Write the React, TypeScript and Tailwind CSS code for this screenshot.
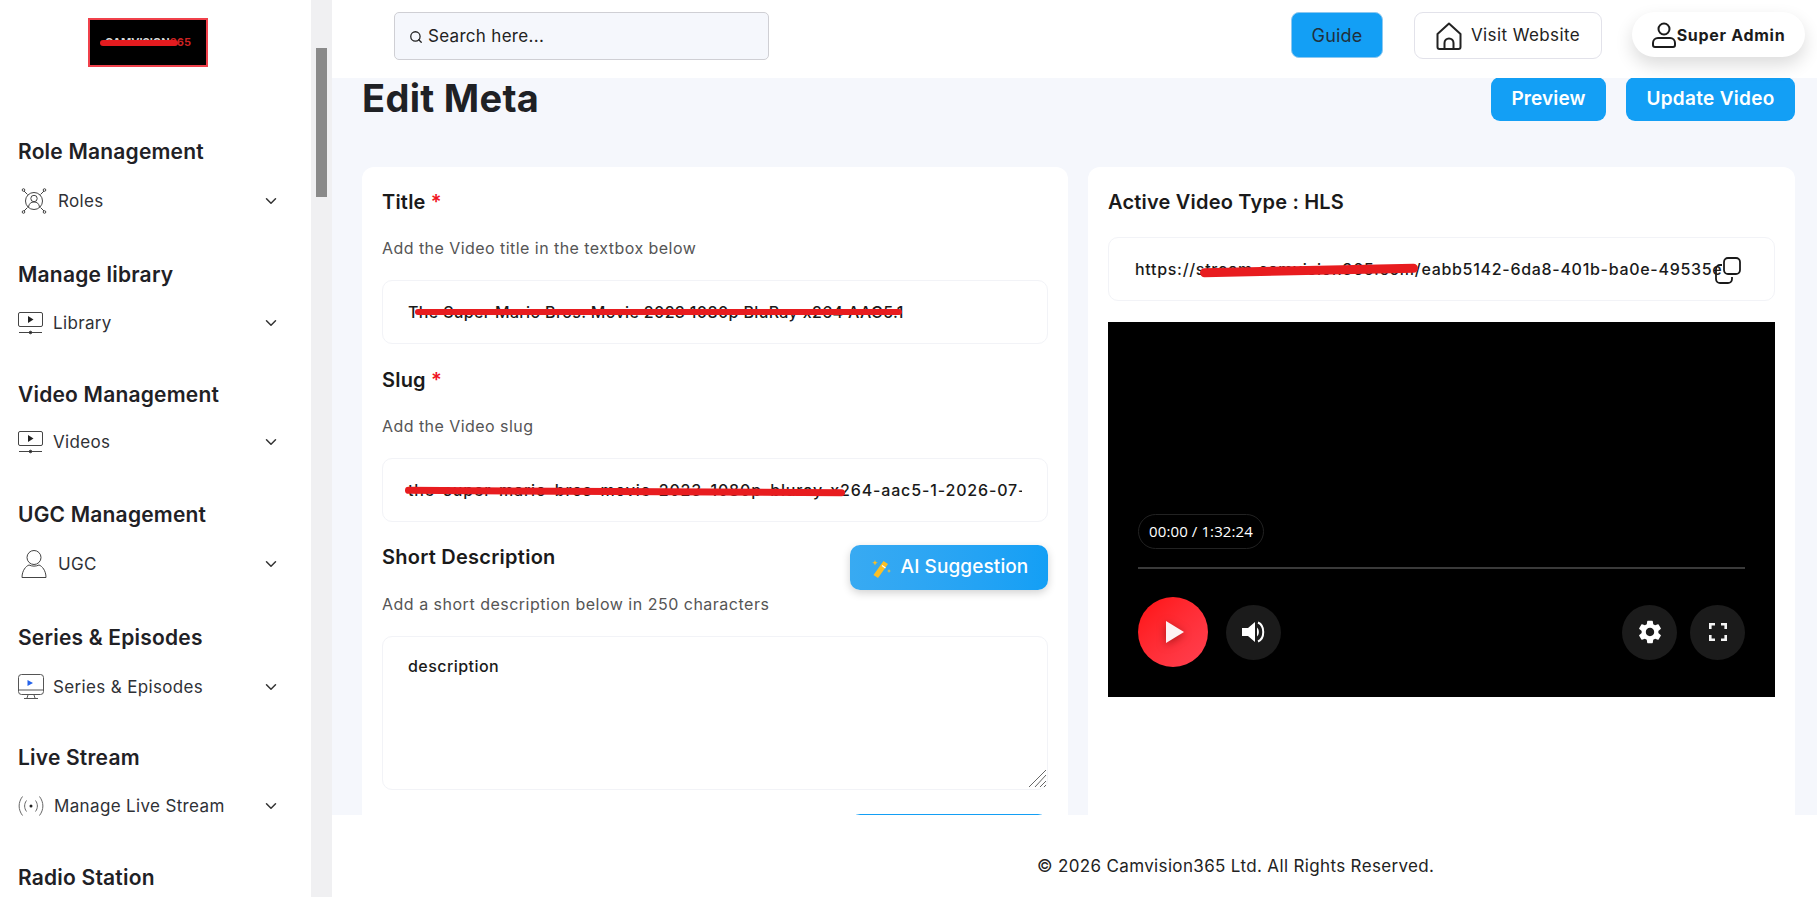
import { ChevronDown, Search } from "lucide-react";
import { MdSettings } from "react-icons/md";
import type { ReactNode } from "react";

function RolesIcon() {
  return (
    <svg width="26" height="30" viewBox="0 0 26 30" fill="none" stroke="#444" strokeWidth="1">
      <circle cx="13" cy="15" r="8.5" />
      <circle cx="13" cy="12.5" r="3.2" />
      <path d="M7.5 21c.5-3.5 2.5-5 5.5-5s5 1.500 5.500 5" />
      <path d="M6.500 8.500 3 5M19.500 8.500 23 5M6.500 21.500 3 25M19.500 21.500 23 25" />
      <circle cx="2.500" cy="4" r="1.300" />
      <circle cx="23.500" cy="4" r="1.300" />
      <circle cx="2.500" cy="26" r="1.300" />
      <circle cx="23.500" cy="26" r="1.300" />
    </svg>
  );
}

function ScreenIcon() {
  return (
    <svg width="25" height="24" viewBox="0 0 25 24" fill="none" stroke="#444" strokeWidth="1">
      <rect x="0.500" y="1.500" width="24" height="14" rx="1.500" />
      <path d="M10 5l5.500 3.500L10 12z" fill="#222" stroke="none" />
      <path d="M1 21.500h23" />
      <circle cx="12.500" cy="21.500" r="1.300" fill="#222" />
    </svg>
  );
}

function UserIcon() {
  return (
    <svg width="26" height="30" viewBox="0 0 26 30" fill="none" stroke="#444" strokeWidth="1">
      <circle cx="13" cy="8.500" r="7" />
      <path d="M1 28.500c0-7 4-11.500 7-12.500 3 1.500 7 1.500 10 0 3 1 7 5.500 7 12.500z" strokeLinejoin="round" />
    </svg>
  );
}

function MonitorIcon() {
  return (
    <svg width="26" height="26" viewBox="0 0 26 26" fill="none" stroke="#555" strokeWidth="1">
      <rect x="0.500" y="0.500" width="25" height="20" rx="3" />
      <path d="M1 16h24" />
      <path d="M9.500 6 15 9l-5.500 3z" fill="#2563eb" stroke="none" />
      <path d="M10 21l-1 3M16 21l1 3M6 24.500h14" />
    </svg>
  );
}

function LiveIcon() {
  return (
    <svg width="26" height="22" viewBox="0 0 26 22" fill="none" stroke="#666" strokeWidth="1">
      <circle cx="13" cy="11" r="1.500" fill="#222" stroke="none" />
      <path d="M8.500 5.500c-2.500 3.500-2.500 7.500 0 11M17.500 5.500c2.500 3.500 2.500 7.500 0 11" />
      <path d="M4.500 1.500c-4.500 6-4.500 13 0 19M21.500 1.500c4.500 6 4.500 13 0 19" />
    </svg>
  );
}

const sections: { title: string; item: string; icon: ReactNode; itemClass: string; boxClass: string; textClass: string }[] = [
  { title: "Role Management", item: "Roles", icon: <RolesIcon />, boxClass: "h-[123px]", itemClass: "mt-[17px]", textClass: "ml-[11px]" },
  { title: "Manage library", item: "Library", icon: <ScreenIcon />, boxClass: "h-[120px]", itemClass: "mt-[16px]", textClass: "ml-[10px]" },
  { title: "Video Management", item: "Videos", icon: <ScreenIcon />, boxClass: "h-[120px]", itemClass: "mt-[15px]", textClass: "ml-[10px]" },
  { title: "UGC Management", item: "UGC", icon: <UserIcon />, boxClass: "h-[123px]", itemClass: "mt-[17px]", textClass: "ml-[11px]" },
  { title: "Series & Episodes", item: "Series & Episodes", icon: <MonitorIcon />, boxClass: "h-[120px]", itemClass: "mt-[17px]", textClass: "ml-[9px]" },
  { title: "Live Stream", item: "Manage Live Stream", icon: <LiveIcon />, boxClass: "h-[120px]", itemClass: "mt-[16px]", textClass: "ml-[10px]" },
];

function Sidebar() {
  return (
    <aside className="flex h-[897px] w-[332px] shrink-0">
      <div className="w-[311px] overflow-hidden bg-white">
        <div className="h-[136px] pl-[88px] pt-[18px]">
          {/* logo */}
          <div className="relative flex h-[49px] w-[120px] items-center justify-center border-2 border-[#f0414b] bg-black text-[11px] font-bold text-[#d8d8d8]">
            <span>CAMVISION</span>
            <span className="text-[#c22]">365</span>
            <div className="absolute left-[10px] top-[20px] h-[6px] w-[78px] rounded-full bg-[#e31b1f]" />
          </div>
        </div>
        {sections.map((s) => (
          <section key={s.title} className={`${s.boxClass} pl-[18px]`}>
            <h3 className="h-[30px] text-[21px] font-semibold leading-[32px] tracking-[0.2px] text-[#1f2125]">{s.title}</h3>
            <div className={`${s.itemClass} flex h-[36px] w-[262px] items-center text-[#2f3136]`}>
              <span className={s.item === "Roles" || s.item === "UGC" ? "ml-[3px] flex" : "flex"}>{s.icon}</span>
              <span className={`${s.textClass} text-[17px] leading-none tracking-[0.35px]`}>{s.item}</span>
              <ChevronDown size={18} strokeWidth={2} className="ml-auto text-[#333]" />
            </div>
          </section>
        ))}
        <h3 className="h-[30px] pl-[18px] text-[21px] font-semibold leading-[32px] tracking-[0.2px] text-[#1f2125]">Radio Station</h3>
      </div>
      <div className="w-[21px] bg-[#f0f0f2] px-[5px] pt-[48px]">
        <div className="h-[149px] w-[11px] bg-[#8a8a8a]" />
      </div>
    </aside>
  );
}

function Header() {
  return (
    <header className="relative z-10 flex h-[78px] shrink-0 items-start bg-white pl-[62px] pr-[12px] pt-[12px]">
      <div className="flex h-[48px] w-[375px] items-center rounded-[5px] border border-[#cfcfd4] bg-[#f5f7fc] pl-[14px] pt-px text-[17px] tracking-[0.3px] text-[#222]">
        <Search size={14} strokeWidth={2.2} className="mr-[5px]" />
        Search here...
      </div>
      <button className="ml-auto h-[46px] w-[92px] rounded-[8px] border border-[#8cc8f0] bg-[#139ff5] text-[18px] tracking-[0.2px] text-[#20303c]">Guide</button>
      <button className="ml-[31px] flex h-[47px] w-[188px] items-center justify-center rounded-[9px] border border-[#e2e2ea] bg-white pt-px text-[17px] tracking-[0.4px] text-[#222]">
        <svg width="26" height="28" viewBox="0 0 26 28" fill="none" stroke="#222" strokeWidth="2" strokeLinejoin="round" className="mr-[9px]">
          <path d="M1.500 12 13 1.500 24.500 12v13a2 2 0 0 1-2 2h-19a2 2 0 0 1-2-2z" />
          <path d="M8.500 27v-6a4.500 4.500 0 0 1 9 0v6" />
        </svg>
        Visit Website
      </button>
      <button className="ml-[30px] flex h-[45px] w-[173px] items-center justify-center rounded-full bg-white text-[16px] font-bold tracking-[0.7px] text-[#1b1b1b] shadow-[0_8px_18px_rgba(0,0,0,0.14)]">
        <svg width="24" height="26" viewBox="0 0 24 26" fill="none" stroke="#1b1b1b" strokeWidth="2" className="mr-[1px]">
          <circle cx="12" cy="7" r="5.500" />
          <path d="M3 25a2 2 0 0 1-2-2v-2a5 5 0 0 1 5-5h12a5 5 0 0 1 5 5v2a2 2 0 0 1-2 2z" />
        </svg>
        Super Admin
      </button>
    </header>
  );
}

function Scribble({ className }: { className: string }) {
  return <div className={`absolute rounded-full bg-[#e81c1f] ${className}`} />;
}

function LeftCard() {
  return (
    <div className="rounded-t-[12px] bg-white px-[20px] pt-[20px]">
      <label className="block h-[28px] text-[20px] font-semibold leading-[30px] tracking-[0.2px] text-[#1a1a1a]">
        Title <span className="text-[#f0141e]">*</span>
      </label>
      <p className="mt-[21px] h-[24px] text-[16px] leading-[24px] tracking-[0.45px] text-[#555]">Add the Video title in the textbox below</p>
      <div className="relative mt-[20px]">
        <input readOnly value="The Super Mario Bros. Movie 2023 1080p BluRay x264 AAC5.1" className="h-[64px] w-full rounded-[10px] border border-[#f2f3f7] px-[25px] text-[16px] font-medium tracking-[0.35px] text-[#1a1a1a] outline-none" />
        <Scribble className="left-[33px] top-[29px] h-[6px] w-[487px]" />
      </div>
      <label className="mt-[21px] block h-[28px] text-[20px] font-semibold leading-[30px] tracking-[0.2px] text-[#1a1a1a]">
        Slug <span className="text-[#f0141e]">*</span>
      </label>
      <p className="mt-[21px] h-[24px] text-[16px] leading-[24px] tracking-[0.45px] text-[#555]">Add the Video slug</p>
      <div className="relative mt-[20px]">
        <input readOnly value="the-super-mario-bros-movie-2023-1080p-bluray-x264-aac5-1-2026-07-" className="h-[64px] w-full rounded-[10px] border border-[#f2f3f7] px-[25px] text-[16px] font-medium tracking-[0.85px] text-[#1a1a1a] outline-none" />
        <Scribble className="left-[23px] top-[30px] h-[7px] w-[440px] rotate-[0.3deg]" />
      </div>
      <div className="flex h-[70px] justify-between pt-[20px]">
        <label className="h-[28px] text-[20px] font-semibold leading-[30px] tracking-[0.25px] text-[#1a1a1a]">Short Description</label>
        <button className="mt-[3px] flex h-[45px] w-[198px] items-center justify-center rounded-[10px] bg-gradient-to-r from-[#38aaf2] to-[#139ff5] text-[19px] font-medium tracking-[0.1px] text-white shadow-[0_3px_8px_rgba(0,0,0,0.18)]">
          <svg width="22" height="22" viewBox="0 0 22 22" className="mr-[9px]">
            <path d="M13.500 4l4.500 3L8 21l-4.500-3z" fill="#fbbf24" />
            <path d="M12 8.500l3.500 2.500" stroke="#fff" strokeWidth="1.200" />
            <path d="M5 3l.8 2 2 .8-2 .8L5 8.500l-.8-1.900-2-.8 2-.8zM19 12l.6 1.400 1.400.6-1.400.6L19 16l-.6-1.400L17 14l1.400-.6z" fill="#fbbf24" />
          </svg>
          AI Suggestion
        </button>
      </div>
      <p className="h-[24px] text-[16px] leading-[24px] tracking-[0.5px] text-[#555]">Add a short description below in 250 characters</p>
      <div className="relative mt-[20px]">
        <textarea readOnly value="description" className="block h-[154px] w-full resize-none rounded-[10px] border border-[#f2f3f7] px-[25px] py-[17px] text-[16px] font-medium tracking-[0.45px] text-[#1a1a1a] outline-none" />
        <svg width="20" height="20" viewBox="0 0 20 20" stroke="#666" strokeWidth="1" className="absolute bottom-[1px] right-[0px]">
          <path d="M1 18 18 1M7 18 18 6M12 18l6-6M16 18l2-2" />
        </svg>
      </div>
      <div className="ml-auto mt-[24px] h-[45px] w-[198px] rounded-[10px] bg-[#139ff5]" />
    </div>
  );
}

function RightCard() {
  return (
    <div className="h-[700px] rounded-t-[12px] bg-white px-[20px] pt-[20px]">
      <h4 className="h-[28px] text-[20px] font-semibold leading-[30px] tracking-[0.2px] text-[#1a1a1a]">Active Video Type : HLS</h4>
      <div className="relative mt-[22px] flex h-[64px] items-center overflow-hidden rounded-[10px] border border-[#f2f3f7] pl-[26px] text-[16px] font-medium tracking-[0.7px] text-[#1a1a1a]">
        <span className="w-[590px] overflow-hidden whitespace-nowrap">https://stream.camvision365.com/eabb5142-6da8-401b-ba0e-49535e</span>
        <Scribble className="left-[91px] top-[28px] h-[9px] w-[218px] -rotate-[1.2deg]" />
        <svg width="27" height="27" viewBox="0 0 27 27" fill="none" stroke="#1a1a1a" strokeWidth="1.800" className="absolute left-[606px] top-[19px]">
          <rect x="9" y="1" width="16" height="16" rx="4" />
          <path d="M7 8H5a4 4 0 0 0-4 4v10a4 4 0 0 0 4 4h8a4 4 0 0 0 4-4v-2" />
        </svg>
      </div>
      <div className="mt-[21px] flex h-[375px] flex-col justify-end bg-black px-[30px] pb-[30px]">
        <div className="flex h-[35px] w-[126px] items-center justify-center rounded-full border border-[#222] font-['Open_Sans',sans-serif] text-[15px] tracking-[0.1px] text-white">
          00:00 / 1:32:24
        </div>
        <div className="mt-[18px] h-[2px] bg-[#3a3a3a]" />
        <div className="mt-[28px] flex items-center">
          <button className="flex h-[70px] w-[70px] items-center justify-center rounded-full bg-gradient-to-br from-[#ff0a0a] to-[#ff4050]">
            <svg width="20" height="24" viewBox="0 0 20 24" className="ml-[3px] drop-shadow-[0_2px_4px_rgba(90,0,0,0.5)]">
              <path d="M1 1v22l18-11z" fill="#fdf2f4" />
            </svg>
          </button>
          <button className="ml-[18px] flex h-[55px] w-[55px] items-center justify-center rounded-full bg-[#1b1b1b]">
            <svg width="24" height="24" viewBox="0 0 24 24" fill="none">
              <path d="M0 8h6l7-6v20l-7-6H0z" fill="#fff" />
              <path d="M15 7.500c2.500 2.500 2.500 6.500 0 9z" fill="#fff" />
              <path d="M16 2.500c7 3 7 16 0 19" stroke="#fff" strokeWidth="2" />
            </svg>
          </button>
          <button className="ml-auto flex h-[55px] w-[55px] items-center justify-center rounded-full bg-[#1b1b1b] text-white">
            <MdSettings size={28} />
          </button>
          <button className="ml-[13px] flex h-[55px] w-[55px] items-center justify-center rounded-full bg-[#1b1b1b]">
            <svg width="18" height="18" viewBox="0 0 18 18" fill="none" stroke="#f4f4f4" strokeWidth="2.600">
              <path d="M1.300 6V1.300H6M12 1.300h4.700V6M16.700 12v4.700H12M6 16.700H1.300V12" />
            </svg>
          </button>
        </div>
      </div>
    </div>
  );
}

export default function App() {
  return (
    <div className="flex h-[897px] w-[1817px] overflow-hidden bg-white font-['Inter',sans-serif]">
      <Sidebar />
      <main className="flex h-[897px] min-w-0 flex-1 flex-col">
        <Header />
        <div className="h-[737px] shrink-0 bg-[#f5f7fc] pl-[30px] pr-[22px]">
          <div className="mb-[46px] flex h-[43px] items-start justify-between">
            <h1 className="-mt-[3px] text-[38px] font-bold leading-[46px] tracking-[0.3px] text-[#1f2125]">Edit Meta</h1>
            <div className="-mt-px flex gap-[20px]">
              <button className="h-[44px] w-[115px] rounded-[9px] bg-[#139ff5] text-[19px] font-semibold tracking-[0.1px] text-white">Preview</button>
              <button className="h-[44px] w-[169px] rounded-[9px] bg-[#139ff5] text-[19px] font-semibold tracking-[0.3px] text-white">Update Video</button>
            </div>
          </div>
          <div className="grid grid-cols-[706px_707px] gap-[20px]">
            <LeftCard />
            <RightCard />
          </div>
        </div>
        <footer className="relative z-10 flex h-[82px] shrink-0 items-center bg-white pl-[705px] pt-[21px] text-[17px] tracking-[0.35px] text-[#222]">
          © 2026 Camvision365 Ltd. All Rights Reserved.
        </footer>
      </main>
    </div>
  );
}
